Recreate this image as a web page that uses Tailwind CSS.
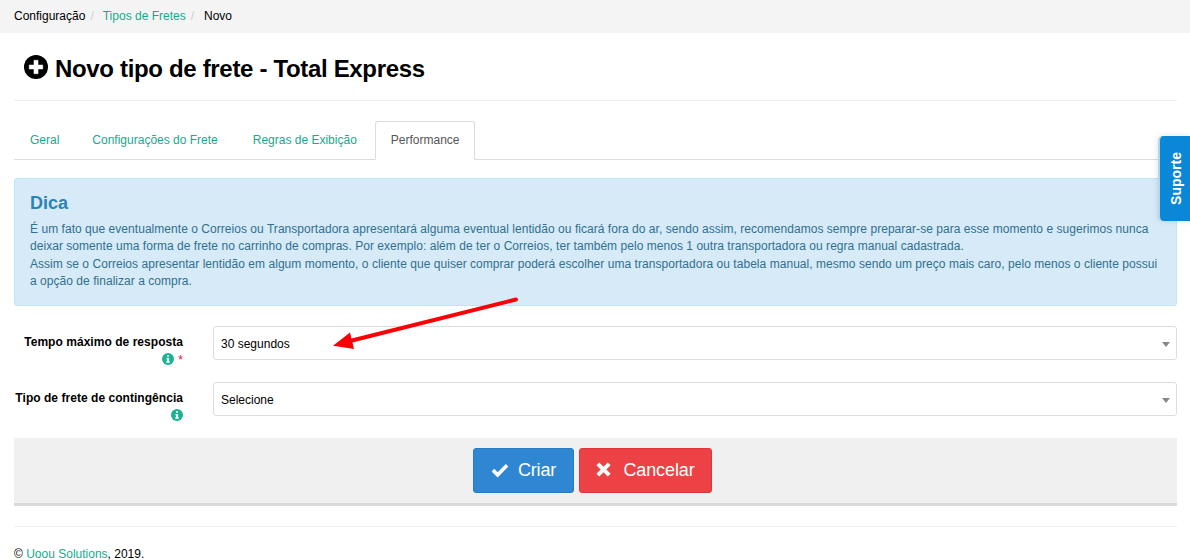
<!DOCTYPE html>
<html lang="pt-BR">
<head>
    <meta charset="UTF-8">
    <title>Novo tipo de frete - Total Express</title>
    <script src="https://cdn.jsdelivr.net/npm/@tailwindcss/browser@4"></script>
</head>
<body class="relative h-[560px] overflow-hidden bg-white font-['Liberation_Sans',Arial,sans-serif] text-[12px] leading-[17px] text-black">

    <!-- Breadcrumb -->
    <nav class="flex h-[33px] items-center bg-[#f4f4f4] px-[14px]">
        <span>Configuração</span>
        <span class="pl-[5px] pr-[5px] text-[#ccc]">/</span>
        <a href="#" class="pl-[4px] text-[#17a98c]">Tipos de Fretes</a>
        <span class="pl-[5px] pr-[5px] text-[#ccc]">/</span>
        <span class="pl-[5px]">Novo</span>
    </nav>

    <main class="pl-[14px] pr-[13px]">
        <!-- Title -->
        <div class="flex h-[68px] items-center gap-[7px] border-b border-[#eee] pl-[10px] pt-[4px]">
            <svg class="h-[24px] w-[24px] -translate-y-[2px]" viewBox="0 0 24 24">
                <circle cx="12" cy="12" r="12" fill="#000"/>
                <path d="M9.9 5.2h4.2v4.7h4.7v4.2h-4.7v4.7H9.9v-4.7H5.2V9.9h4.7z" fill="#fff" stroke="#fff" stroke-width="0.4" stroke-linejoin="round"/>
            </svg>
            <h1 class="text-[24px] font-bold leading-[26px] tracking-[-0.33px]">Novo tipo de frete - Total Express</h1>
        </div>

        <!-- Tabs -->
        <div class="mt-[20px] flex h-[39px] border-b border-[#ddd]">
            <a href="#" class="mr-[1px] flex h-[39px] items-center px-[16px] text-[#17a98c]">Geral</a>
            <a href="#" class="mr-[3px] flex h-[39px] items-center px-[16px] text-[#17a98c]">Configurações do Frete</a>
            <a href="#" class="mr-[2px] flex h-[39px] items-center px-[16px] text-[#17a98c]">Regras de Exibição</a>
            <a href="#" class="flex h-[39px] items-center rounded-t-[3px] border border-b-white border-[#ddd] bg-white pl-[15px] pr-[14px] text-[#555]">Performance</a>
        </div>

        <!-- Alert -->
        <div class="mt-[18px] h-[128px] rounded-[3px] border border-[#bce8f1] bg-[#d6eaf8] px-[15px] pt-[14px] text-[#31708f]">
            <h4 class="text-[18px] font-bold leading-[20px] text-[#2a84b4]">Dica</h4>
            <p class="mt-[8px] leading-[17.4px] tracking-[0.04px]">É um fato que eventualmente o Correios ou Transportadora apresentará alguma eventual lentidão ou ficará fora do ar, sendo assim, recomendamos sempre preparar-se para esse momento e sugerimos nunca deixar somente uma forma de frete no carrinho de compras. Por exemplo: além de ter o Correios, ter também pelo menos 1 outra transportadora ou regra manual cadastrada.<br>Assim se o Correios apresentar lentidão em algum momento, o cliente que quiser comprar poderá escolher uma transportadora ou tabela manual, mesmo sendo um preço mais caro, pelo menos o cliente possui a opção de finalizar a compra.</p>
        </div>

        <!-- Form -->
        <div class="mt-[20px] flex h-[34px]">
            <div class="w-[169px] shrink-0 text-right">
                <label class="block pt-[8px] font-bold leading-[17px] tracking-[0.04px]">Tempo máximo de resposta</label>
                <div class="mt-[1px] flex items-start justify-end gap-[4px]">
                    <svg class="mt-[1px] h-[12px] w-[12px]" viewBox="0 0 12 12">
                        <circle cx="6" cy="6" r="6" fill="#1ab394"/>
                        <path d="M5 2.2h2v1.6H5zM4.4 4.9h2.7v3.4h.7v1.4H4.3V8.3H5V6.3h-.6z" fill="#fff"/>
                    </svg>
                    <span class="text-[#e8103a]">*</span>
                </div>
            </div>
            <div class="ml-[30px] flex h-[34px] flex-1 items-center justify-between rounded-[3px] border border-[#ddd] pl-[7px] pr-[6px]">
                <span class="translate-y-[1px]">30 segundos</span>
                <span class="mt-[2px] h-0 w-0 border-x-[4px] border-t-[5px] border-x-transparent border-t-[#888]"></span>
            </div>
        </div>

        <div class="mt-[22px] flex h-[34px]">
            <div class="w-[169px] shrink-0 text-right">
                <label class="block pt-[8px] font-bold leading-[17px] tracking-[0.04px]">Tipo de frete de contingência</label>
                <div class="mt-[1px] flex items-start justify-end">
                    <svg class="mt-[1px] h-[12px] w-[12px]" viewBox="0 0 12 12">
                        <circle cx="6" cy="6" r="6" fill="#1ab394"/>
                        <path d="M5 2.2h2v1.6H5zM4.4 4.9h2.7v3.4h.7v1.4H4.3V8.3H5V6.3h-.6z" fill="#fff"/>
                    </svg>
                </div>
            </div>
            <div class="ml-[30px] flex h-[34px] flex-1 items-center justify-between rounded-[3px] border border-[#ddd] pl-[7px] pr-[6px]">
                <span class="translate-y-[1px]">Selecione</span>
                <span class="mt-[2px] h-0 w-0 border-x-[4px] border-t-[5px] border-x-transparent border-t-[#888]"></span>
            </div>
        </div>

        <!-- Actions -->
        <div class="mt-[22px] flex h-[68px] justify-center gap-[5px] border-b-[3px] border-[#d9d9d9] bg-[#f0f0f0] pr-[6px] pt-[10px]">
            <button class="flex h-[45px] w-[101px] items-center justify-center gap-[9px] rounded-[3px] border border-[#2a7cc2] bg-[#2f86d2] text-[18px] tracking-[-0.2px] text-white">
                <svg class="h-[18px] w-[18px]" viewBox="0 0 18 18"><path d="M6.6 15.4 0.6 9.4 3.2 6.8 6.6 10.2 14.8 2 17.4 4.6z" fill="#fff"/></svg>
                Criar
            </button>
            <button class="flex h-[45px] w-[133px] items-center justify-center gap-[12px] rounded-[3px] border border-[#e0353a] bg-[#ec4245] text-[18px] tracking-[-0.1px] text-white">
                <svg class="-mt-[2px] h-[15px] w-[15px]" viewBox="0 0 15 15"><path d="M3.2.4 7.5 4.7 11.8.4 14.6 3.2 10.3 7.5 14.6 11.8 11.8 14.6 7.5 10.3 3.2 14.6.4 11.8 4.7 7.5.4 3.2z" fill="#fff"/></svg>
                Cancelar
            </button>
        </div>

        <!-- Footer -->
        <footer class="mt-[20px] border-t border-[#eee] pt-[19px]">
            © <a href="#" class="text-[#17a98c]">Uoou Solutions</a>, 2019.
        </footer>
    </main>

    <!-- Red annotation arrow -->
    <svg class="pointer-events-none absolute left-0 top-0" width="1190" height="560" viewBox="0 0 1190 560">
        <path d="M516 299.5 350 341" stroke="#fb0007" stroke-width="4" stroke-linecap="round" fill="none"/>
        <path d="M333 345.7 350 332.5 354 349z" fill="#fb0007"/>
    </svg>

    <!-- Support tab -->
    <div class="absolute left-[1158px] top-[136px] flex h-[85px] w-[32px] items-center justify-center rounded-l-[5px] border-l-2 border-[#b5d5ea] bg-[#0a87d6] pl-[2px] shadow-[0_0_6px_rgba(0,0,0,0.12)]">
        <span class="-rotate-90 whitespace-nowrap text-[14px] font-bold text-white">Suporte</span>
    </div>
</body>
</html>
